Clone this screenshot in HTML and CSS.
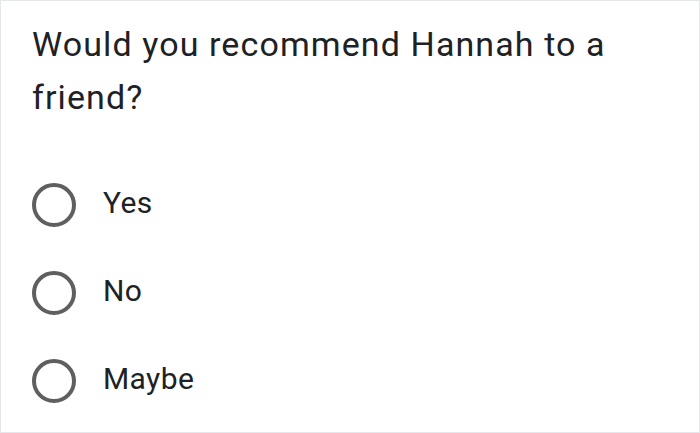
FILE: index.html
```html
<!DOCTYPE html>
<html>
<head>
<meta charset="utf-8">
<link rel="stylesheet" href="styles.css">
</head>
<body>
<div class="card">
  <h1 class="question">Would you recommend Hannah to a friend?</h1>
  <div class="options">
    <label class="option"><span class="radio"></span><span class="label">Yes</span></label>
    <label class="option"><span class="radio"></span><span class="label">No</span></label>
    <label class="option"><span class="radio"></span><span class="label">Maybe</span></label>
  </div>
</div>
</body>
</html>
```
FILE: styles.css
```css
html, body {
  margin: 0;
  padding: 0;
  background: #ffffff;
}
.card {
  box-sizing: border-box;
  width: 700px;
  height: 433px;
  border: 1px solid #e4e8eb;
  padding: 17px 0 0 31px;
  font-family: Roboto, "Liberation Sans", sans-serif;
  color: #202124;
  background: #ffffff;
}
.question {
  margin: 0;
  width: 640px;
  font-size: 34px;
  font-weight: 400;
  line-height: 53px;
  letter-spacing: 1.1px;
}
.options {
  display: flex;
  flex-direction: column;
  margin-top: 37px;
}
.option {
  display: flex;
  align-items: center;
  height: 88px;
}
.radio {
  box-sizing: border-box;
  width: 44px;
  height: 44px;
  border: 4px solid #5f5f62;
  border-radius: 50%;
  flex: none;
}
.label {
  margin-left: 27px;
  font-size: 30px;
  line-height: 40px;
  margin-top: -4px;
  letter-spacing: 0.4px;
}
```
